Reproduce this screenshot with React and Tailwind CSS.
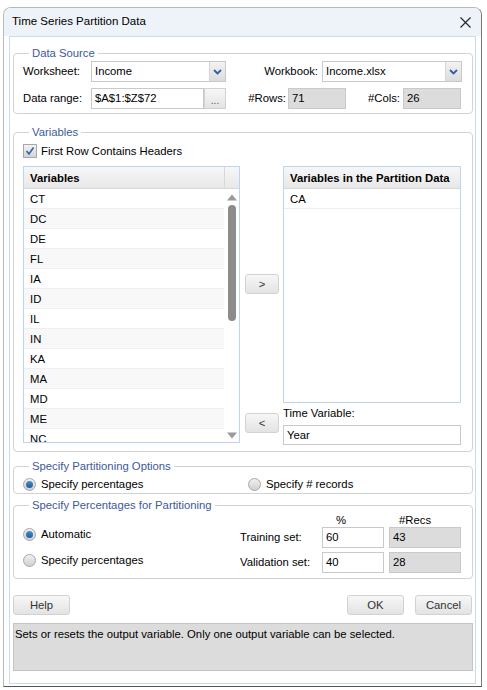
import React from 'react';

const font = { fontFamily: '"Liberation Sans", Arial, sans-serif' };

function Fieldset({ title, className = '', children }) {
    return (
        <fieldset className={`border border-[#d3d3d3] rounded-[4px] mx-0 ${className}`}>
            <legend className="ml-[6px] px-[3px] text-[11.3px] leading-[14px] text-[#3c5a9a]">{title}</legend>
            {children}
        </fieldset>
    );
}

function Chevron() {
    return (
        <svg width="9" height="6" viewBox="0 0 9 6">
            <path d="M1 1 L4.5 4.5 L8 1" fill="none" stroke="#2f5fa8" strokeWidth="1.8" />
        </svg>
    );
}

function Select({ value, className = '' }) {
    return (
        <div className={`h-[21px] flex border border-[#c9c9c9] bg-white ${className}`}>
            <div className="flex-1 px-[3px] text-[11.3px] leading-[19px] text-black">{value}</div>
            <div className="w-[16px] flex items-center justify-center bg-gradient-to-b from-[#f3f3f3] to-[#dcdcdc] border-l border-[#d6d6d6]">
                <Chevron />
            </div>
        </div>
    );
}

function TextBox({ value, className = '' }) {
    return (
        <div className={`h-[21px] border border-[#c9c9c9] bg-white px-[3px] text-[11.3px] leading-[19px] text-black ${className}`}>
            {value}
        </div>
    );
}

function GrayBox({ value, className = '' }) {
    return (
        <div className={`h-[21px] border border-[#c9c9c9] bg-[#dcdcdc] px-[3px] text-[11.3px] leading-[19px] text-black ${className}`}>
            {value}
        </div>
    );
}

function Btn({ label, className = '' }) {
    return (
        <div className={`h-[20px] flex items-center justify-center rounded-[3px] border border-[#d2d2d2] bg-gradient-to-b from-[#f7f7f7] to-[#e3e3e3] text-[11.3px] text-[#333] ${className}`}>
            {label}
        </div>
    );
}

function Radio({ checked, label, className = '' }) {
    return (
        <div className={`flex items-center h-[14px] ${className}`}>
            <div className="w-[13px] h-[13px] rounded-full border border-[#a8a8a8] bg-gradient-to-b from-[#f0f0f0] to-[#d0d0d0] flex items-center justify-center">
                {checked && <div className="w-[7px] h-[7px] rounded-full bg-gradient-to-b from-[#4a90c8] to-[#1a5f9a]" />}
            </div>
            <span className="ml-[5px] text-[11.3px] text-black">{label}</span>
        </div>
    );
}

const vars = ['CT', 'DC', 'DE', 'FL', 'IA', 'ID', 'IL', 'IN', 'KA', 'MA', 'MD', 'ME', 'NC'];

export default function App() {
    return (
        <div className="w-[487px] h-[690px] bg-white pt-[7px] pl-[3px]" style={font}>
            <div className="w-[479px] h-[680px] rounded-t-[8px] border border-[#b9b9b9] border-b-[#555] border-r-[#777] bg-white flex flex-col overflow-hidden">
                {/* title bar */}
                <div className="h-[28px] bg-[#eef3f9] flex items-center justify-between pl-[8px] pr-[10px] shrink-0">
                    <span className="text-[11.5px] text-black">Time Series Partition Data</span>
                    <svg width="11" height="11" viewBox="0 0 11 11">
                        <path d="M0.5 0.5 L10.5 10.5 M10.5 0.5 L0.5 10.5" stroke="#222" strokeWidth="1.1" />
                    </svg>
                </div>

                <div className="ml-[5px] w-[467px] h-[648px] border border-[#c8dcf0] pl-[3px] pr-[2px] flex flex-col">
                    {/* Data Source */}
                    <Fieldset title="Data Source" className="mt-[9px] pl-[9px] pb-[4px] pt-[1px]">
                        <div className="flex items-center text-[11.3px] text-black">
                            <span className="w-[68px]">Worksheet:</span>
                            <Select value="Income" className="w-[135px]" />
                            <span className="w-[96px] text-right pr-[4px]">Workbook:</span>
                            <Select value="Income.xlsx" className="w-[140px]" />
                        </div>
                        <div className="flex items-center text-[11.3px] text-black mt-[6px]">
                            <span className="w-[68px]">Data range:</span>
                            <TextBox value="$A$1:$Z$72" className="w-[113px]" />
                            <div className="w-[22px] h-[21px] border border-[#d2d2d2] bg-gradient-to-b from-[#f7f7f7] to-[#e3e3e3] text-[10px] text-[#555] flex items-center justify-center leading-none pt-[4px]">...</div>
                            <span className="w-[62px] text-right pr-[2px]">#Rows:</span>
                            <GrayBox value="71" className="w-[58px]" />
                            <span className="w-[57px] text-right pr-[3px]">#Cols:</span>
                            <GrayBox value="26" className="w-[58px]" />
                        </div>
                    </Fieldset>

                    {/* Variables */}
                    <Fieldset title="Variables" className="mt-[11px] pl-[9px] pb-[6px] pt-[5px]">
                        <div className="flex items-center h-[14px]">
                            <div className="w-[14px] h-[14px] border border-[#a8a8a8] bg-gradient-to-b from-[#f2f2f2] to-[#d4d4d4] flex items-center justify-center">
                                <svg width="10" height="10" viewBox="0 0 10 10">
                                    <path d="M1.5 5 L4 8 L8.5 1.5" fill="none" stroke="#2f62b0" strokeWidth="1.6" />
                                </svg>
                            </div>
                            <span className="ml-[4px] text-[11.3px] text-black">First Row Contains Headers</span>
                        </div>
                        <div className="flex mt-[8px]">
                            {/* left list */}
                            <div className="w-[217px] h-[277px] border border-[#bcd5ee] flex flex-col overflow-hidden bg-white">
                                <div className="h-[22px] flex shrink-0 border-b border-[#d8d8d8] bg-gradient-to-b from-[#f7f7f7] to-[#e8e8e8]">
                                    <div className="flex-1 pl-[6px] text-[11.3px] font-bold leading-[22px] text-black">Variables</div>
                                    <div className="w-[15px] border-l border-[#d8d8d8]" />
                                </div>
                                <div className="flex flex-1 overflow-hidden">
                                    <div className="flex-1 overflow-hidden">
                                        {vars.map((v, i) => (
                                            <div key={v} className={`h-[20px] pl-[6px] text-[11.3px] leading-[20px] text-black border-b border-[#efefef] ${i % 2 ? 'bg-[#f8f8f8]' : 'bg-white'}`}>
                                                {v}
                                            </div>
                                        ))}
                                    </div>
                                    <div className="w-[15px] flex flex-col items-center bg-white">
                                        <svg width="10" height="7" viewBox="0 0 10 7" className="mt-[5px]">
                                            <path d="M0 6.5 L5 0.5 L10 6.5 Z" fill="#9a9a9a" />
                                        </svg>
                                        <div className="w-[8px] h-[116px] mt-[4px] rounded-full bg-[#8c8c8c]" />
                                        <div className="flex-1" />
                                        <svg width="10" height="7" viewBox="0 0 10 7" className="mb-[3px]">
                                            <path d="M0 0.5 L5 6.5 L10 0.5 Z" fill="#9a9a9a" />
                                        </svg>
                                    </div>
                                </div>
                            </div>
                            {/* middle buttons */}
                            <div className="w-[43px] flex flex-col items-center pl-[5px] pr-[4px]">
                                <Btn label=">" className="w-[34px] mt-[108px]" />
                                <Btn label="<" className="w-[34px] mt-[119px]" />
                            </div>
                            {/* right side */}
                            <div className="w-[178px] flex flex-col">
                                <div className="h-[237px] border border-[#bcd5ee] bg-white flex flex-col">
                                    <div className="h-[22px] border-b border-[#d8d8d8] bg-gradient-to-b from-[#f7f7f7] to-[#e8e8e8] pl-[6px] text-[11.3px] font-bold leading-[22px] text-black whitespace-nowrap">
                                        Variables in the Partition Data
                                    </div>
                                    <div className="h-[20px] pl-[6px] text-[11.3px] leading-[20px] text-black border-b border-[#efefef]">CA</div>
                                </div>
                                <div className="mt-[3px] text-[11.3px] leading-[14px] text-black">Time Variable:</div>
                                <div className="mt-[5px] h-[20px] w-[178px] border border-[#c9c9c9] bg-white px-[3px] text-[11.3px] leading-[18px] text-black">Year</div>
                            </div>
                        </div>
                    </Fieldset>

                    {/* Partitioning options */}
                    <Fieldset title="Specify Partitioning Options" className="mt-[7px] pl-[9px] pt-[4px] pb-[2px]">
                        <div className="flex">
                            <Radio checked label="Specify percentages" className="w-[225px]" />
                            <Radio label="Specify # records" />
                        </div>
                    </Fieldset>

                    {/* Percentages */}
                    <Fieldset title="Specify Percentages for Partitioning" className="mt-[4px] pl-[9px] pt-[1px] pb-[5px]">
                        <div className="flex">
                            <div className="w-[217px] flex flex-col">
                                <Radio checked label="Automatic" className="mt-[14px]" />
                                <Radio label="Specify percentages" className="mt-[12px]" />
                            </div>
                            <div className="flex flex-col text-[11.3px] text-black">
                                <div className="h-[14px] flex leading-[14px]">
                                    <span className="ml-[96px]">%</span>
                                    <span className="ml-[53px]">#Recs</span>
                                </div>
                                <div className="flex items-center">
                                    <span className="w-[82px]">Training set:</span>
                                    <TextBox value="60" className="w-[62px]" />
                                    <GrayBox value="43" className="w-[72px] ml-[5px]" />
                                </div>
                                <div className="flex items-center mt-[4px]">
                                    <span className="w-[82px]">Validation set:</span>
                                    <TextBox value="40" className="w-[62px]" />
                                    <GrayBox value="28" className="w-[72px] ml-[5px]" />
                                </div>
                            </div>
                        </div>
                    </Fieldset>

                    {/* buttons */}
                    <div className="flex mt-[16px]">
                        <Btn label="Help" className="w-[57px]" />
                        <div className="flex-1" />
                        <Btn label="OK" className="w-[57px]" />
                        <Btn label="Cancel" className="w-[57px] ml-[11px] mr-[1px]" />
                    </div>

                    <div className="mt-[8px] h-[48px] border border-[#c4c4c4] bg-[#dcdcdc] px-[1px] pt-[2px] text-[11.3px] text-black">
                        Sets or resets the output variable. Only one output variable can be selected.
                    </div>
                </div>
            </div>
        </div>
    );
}
